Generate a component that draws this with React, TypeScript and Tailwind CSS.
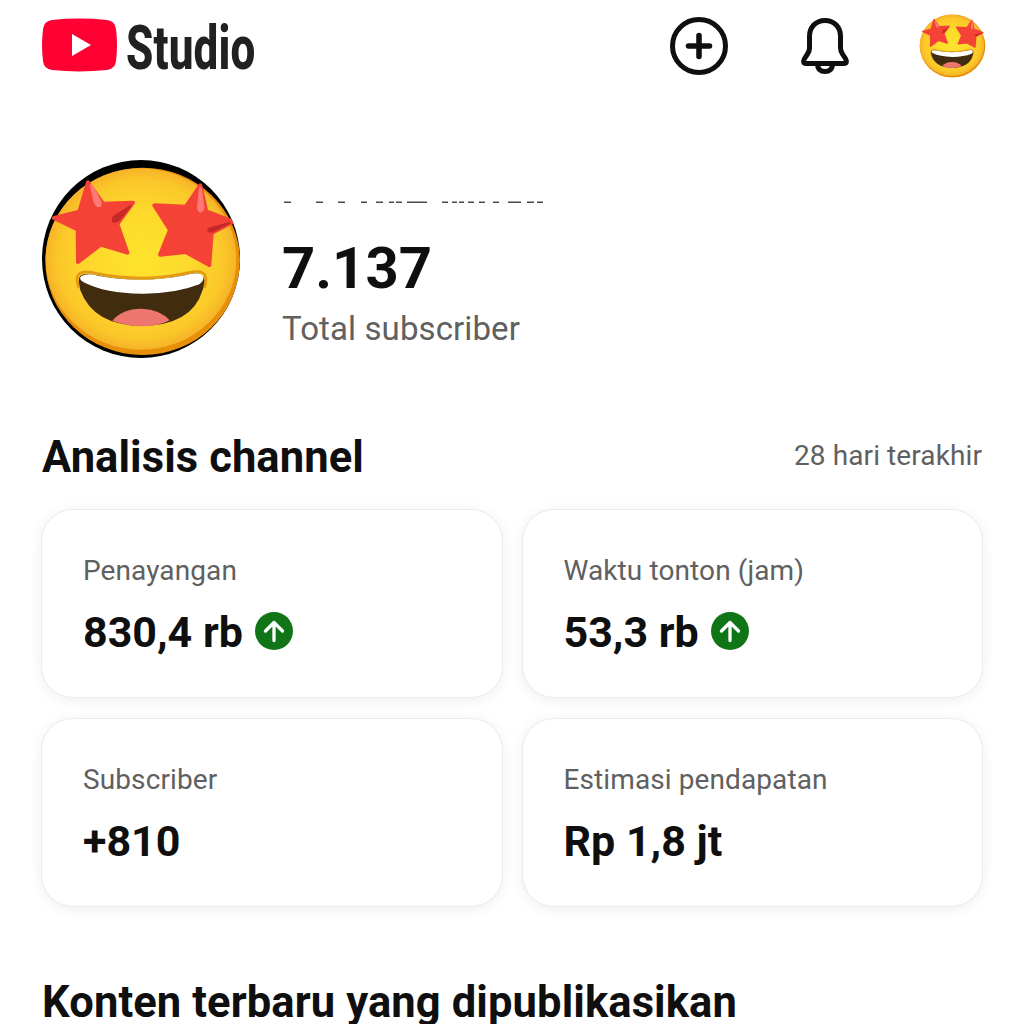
import { FiPlus } from "react-icons/fi";

type Stat = {
    label: string;
    value: string;
    up?: boolean;
};

const stats: Stat[] = [
    { label: "Penayangan", value: "830,4 rb", up: true },
    { label: "Waktu tonton (jam)", value: "53,3 rb", up: true },
    { label: "Subscriber", value: "+810" },
    { label: "Estimasi pendapatan", value: "Rp 1,8 jt" },
];

// [x, width] of every visible stroke of the hidden channel name
const nameMarks = [
    [2, 7], [34, 7], [56, 7], [79, 6], [94, 7], [107, 5], [114, 6], [125, 20],
    [160, 6], [170, 5], [177, 5], [186, 6], [197, 6], [211, 6], [226, 13], [245, 7], [255, 6],
];

function EmojiFace({ id }: { id: string }) {
    return (
        <>
            <defs>
                <radialGradient id={id} cx="0.5" cy="0.5" r="0.52">
                    <stop offset="0" stopColor="#fee32d" />
                    <stop offset="0.5" stopColor="#fdd92c" />
                    <stop offset="0.83" stopColor="#fbc829" />
                    <stop offset="1" stopColor="#f5ae28" />
                </radialGradient>
            </defs>
            <ellipse cx="338" cy="334" rx="292" ry="281" fill="#e88f0a" />
            <ellipse cx="333" cy="327" rx="286" ry="272" fill={`url(#${id})`} />
            <g strokeLinejoin="round" strokeWidth="12" fill="#f44336" stroke="#f44336">
                <path d="M174 97L219 161L309 158L262 222L292 308L212 284L144 336L143 238L72 204L148 185Z" />
                <path d="M511 106L529 184L609 215L545 249L538 345L467 306L390 314L420 240L373 166L468 170Z" />
            </g>
            <g>
                <path d="M179 105Q182 97 190 109L215 155Q217 171 205 172Q194 169 190 153Z" fill="#ff7973" />
                <path d="M507 114Q512 105 516 116L523 172Q522 187 512 188Q501 186 501 172Z" fill="#ff7973" />
                <path d="M248 199L307 161Q298 179 267 214Q251 224 245 214Z" fill="#c62828" />
                <path d="M536 233L600 215Q609 218 592 225L550 247Q534 251 531 242Z" fill="#c62828" />
            </g>
            <path d="M153 376Q168 366 204 376Q334 403 465 375Q504 363 515 376Q532 390 517 422Q486 525 334 528Q190 526 151 421Q140 388 153 376Z" fill="#412c0f" />
            <path d="M247 512Q278 475 336 476Q390 478 419 511Q386 529 334 529Q287 528 247 512Z" fill="#ed766f" />
            <path d="M154 378Q173 368 204 377Q334 402 465 376Q504 363 517 376Q526 390 508 403Q435 432 334 431Q228 431 161 397Q144 387 154 378Z" fill="#fff" />
            <path d="M146 411Q134 378 152 369Q168 361 204 371Q334 398 465 370Q502 360 517 368Q535 378 524 411" fill="none" stroke="#e49a13" strokeWidth="8" strokeLinecap="round" />
        </>
    );
}

function StudioLogo() {
    return (
        <div className="flex items-center">
            <svg className="mb-px h-[54px] w-[77px]" viewBox="0 0 77 54">
                <path d="M11 2Q38-.8 66 2Q74 3 75 11Q77 27 75 43Q74 51 66 52Q38 54.8 11 52Q3 51 2 43Q0 27 2 11Q3 3 11 2Z" fill="#ff0033" />
                <path d="M31 16L50 27L31 38Z" fill="#fff" />
            </svg>
            <span className="mt-1 ml-2 w-[130px] origin-left scale-x-[0.71] text-[62px] leading-[64px] font-extrabold tracking-[0.2px] whitespace-nowrap text-[#212121]">Studio</span>
        </div>
    );
}

function StatCard({ stat }: { stat: Stat }) {
    return (
        <div className="h-[189px] rounded-[32px] border border-[#ebebeb] bg-white px-[41px] pt-[44px] shadow-[0_2px_14px_rgba(0,0,0,0.07)]">
            <p className="text-[28px] leading-[34px] tracking-[0.1px] text-[#606060]">{stat.label}</p>
            <div className="mt-[18px] flex items-center gap-3">
                <span className="text-[43px] leading-[52px] font-bold whitespace-nowrap">{stat.value}</span>
                {stat.up && (
                    <svg className="mb-[3px] size-[38px]" viewBox="0 0 38 38" fill="none">
                        <circle cx="19" cy="19" r="19" fill="#107516" />
                        <path d="M19 28.500V10.500M10.500 19L19 10.500L27.500 19" stroke="#fff" strokeWidth="3.300" strokeLinecap="round" strokeLinejoin="round" />
                    </svg>
                )}
            </div>
        </div>
    );
}

function App() {
    return (
        <div className="h-[1024px] w-[1024px] overflow-hidden bg-white font-[Roboto,sans-serif] text-[#0f0f0f]">
            <header className="flex h-[91px] items-center justify-between pr-[38px] pl-[41px]">
                <StudioLogo />
                <div className="flex items-center">
                    <button className="mr-[72px] flex size-[58px] items-center justify-center rounded-full border-[5px] border-[#0f0f0f]">
                        <FiPlus className="size-[36px]" strokeWidth={3.7} />
                    </button>
                    <svg className="mr-[69px] h-[58px] w-[50px]" viewBox="0 0 50 58" fill="none" stroke="currentColor" strokeWidth="5" strokeLinejoin="round">
                        <path d="M25 3.500C15 3.500 9.500 11 9.500 19V31Q9.500 34 7.500 37L4.300 42Q2.300 46.500 6 46.500H44Q47.700 46.500 45.700 42L42.500 37Q40.500 34 40.500 31V19C40.500 11 35 3.500 25 3.500Z" />
                        <path d="M17.500 47C17.500 52 20.500 54.500 25 54.500S32.500 52 32.500 47" />
                    </svg>
                    <svg className="h-[66px] w-[67px]" viewBox="40 48 596 572">
                        <EmojiFace id="face-small" />
                    </svg>
                </div>
            </header>

            <section className="mt-[67px] flex px-10">
                <svg className="size-[202px]" viewBox="30 24 606 606">
                    <circle cx="333" cy="327" r="297" fill="#000" />
                    <clipPath id="avatar">
                        <circle cx="333" cy="327" r="297" />
                    </clipPath>
                    <g clipPath="url(#avatar)">
                        <EmojiFace id="face-large" />
                    </g>
                </svg>
                <div className="ml-10 pt-[43px]">
                    <svg className="h-[4px] w-[270px]" viewBox="0 0 270 4" fill="#4a4a4a">
                        {nameMarks.map(([x, w]) => (
                            <rect key={x} x={x} y="0.500" width={w} height="1.500" />
                        ))}
                    </svg>
                    <p className="mt-[29px] text-[58px] leading-[68px] font-bold">7.137</p>
                    <p className="mt-[7px] text-[33px] leading-[40px] tracking-[0.1px] text-[#606060]">Total subscriber</p>
                </div>
            </section>

            <section className="mt-[70px] px-[41px]">
                <div className="flex items-start justify-between pr-px">
                    <h2 className="pt-0.5 pl-px text-[43.5px] leading-[52px] font-bold tracking-[0.1px]">Analisis channel</h2>
                    <span className="mt-[9px] text-[28px] leading-[34px] tracking-[0.1px] text-[#606060]">28 hari terakhir</span>
                </div>
                <div className="mt-[25px] grid grid-cols-2 gap-x-[19px] gap-y-5">
                    {stats.map((stat) => (
                        <StatCard key={stat.label} stat={stat} />
                    ))}
                </div>
            </section>

            <h2 className="mt-[70px] px-[42px] text-[43.5px] leading-[52px] font-bold tracking-[0.12px] whitespace-nowrap">Konten terbaru yang dipublikasikan</h2>
        </div>
    );
}

export default App;
